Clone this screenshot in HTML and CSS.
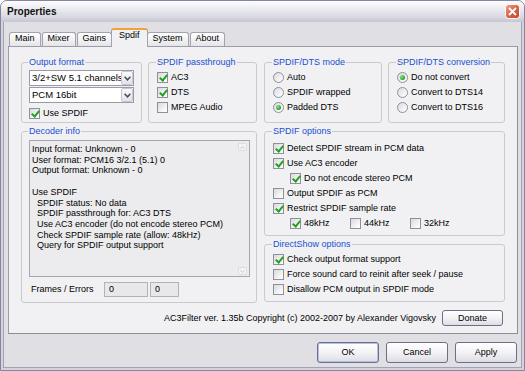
FILE: index.html
```html
<!DOCTYPE html>
<html>
<head>
	<meta charset="utf-8">
	<title>Properties</title>
	<link rel="stylesheet" href="styles.css">
</head>
<body>
	<div class="window">
		<div class="titlebar">
			<span class="title">Properties</span>
			<span class="close">
				<svg width="15" height="15" viewBox="0 0 15 15">
					<defs>
						<linearGradient id="red" x1="0" y1="0" x2="1" y2="1">
							<stop offset="0" stop-color="#f0a08c"/>
							<stop offset="0.5" stop-color="#dc6446"/>
							<stop offset="1" stop-color="#c4402a"/>
						</linearGradient>
					</defs>
					<rect x="0.5" y="0.5" width="14" height="14" rx="3" fill="url(#red)" stroke="#fff"/>
					<path d="M4 4 L11 11 M11 4 L4 11" stroke="#fff" stroke-width="1.8"/>
				</svg>
			</span>
		</div>
		<div class="client">
			<ul class="tabs">
				<li>Main</li>
				<li>Mixer</li>
				<li>Gains</li>
				<li class="active">Spdif</li>
				<li>System</li>
				<li>About</li>
			</ul>
			<div class="page">
				<div class="groups">
					<div class="half left">
						<div class="row">
							<fieldset class="g-output">
								<legend>Output format</legend>
								<div class="combo">
									<span class="val">3/2+SW 5.1 channels</span>
									<span class="drop"><svg width="7" height="5" viewBox="0 0 7 5"><path d="M0.6 0.8 L3.5 3.8 L6.4 0.8" fill="none" stroke="#4b4b5c" stroke-width="1.5"/></svg></span>
								</div>
								<div class="combo">
									<span class="val">PCM 16bit</span>
									<span class="drop"><svg width="7" height="5" viewBox="0 0 7 5"><path d="M0.6 0.8 L3.5 3.8 L6.4 0.8" fill="none" stroke="#4b4b5c" stroke-width="1.5"/></svg></span>
								</div>
								<label class="check use"><span class="cb on"></span>Use SPDIF</label>
							</fieldset>
							<fieldset class="g-pass">
								<legend>SPDIF passthrough</legend>
								<label class="check"><span class="cb on"></span>AC3</label>
								<label class="check"><span class="cb on"></span>DTS</label>
								<label class="check"><span class="cb"></span>MPEG Audio</label>
							</fieldset>
						</div>
						<fieldset class="g-info">
							<legend>Decoder info</legend>
							<div class="info">
<pre>Input format: Unknown - 0
User format: PCM16 3/2.1 (5.1) 0
Output format: Unknown - 0

Use SPDIF
  SPDIF status: No data
  SPDIF passthrough for: AC3 DTS
  Use AC3 encoder (do not encode stereo PCM)
  Check SPDIF sample rate (allow: 48kHz)
  Query for SPDIF output support</pre>
								<div class="scroll">
									<span class="arr"><svg width="5" height="3" viewBox="0 0 5 3"><path d="M0.5 2.6 L2.5 0.6 L4.5 2.6" fill="none" stroke="#c4c4cc" stroke-width="1"/></svg></span>
									<span class="arr"><svg width="5" height="3" viewBox="0 0 5 3"><path d="M0.5 0.4 L2.5 2.4 L4.5 0.4" fill="none" stroke="#c4c4cc" stroke-width="1"/></svg></span>
								</div>
							</div>
							<div class="frames">
								<span class="lbl">Frames / Errors</span>
								<span class="edit w1">0</span>
								<span class="edit w2">0</span>
							</div>
						</fieldset>
					</div>
					<div class="half right">
						<div class="row">
							<fieldset class="g-mode">
								<legend>SPDIF/DTS mode</legend>
								<label class="check"><span class="rb"></span>Auto</label>
								<label class="check"><span class="rb"></span>SPDIF wrapped</label>
								<label class="check"><span class="rb on"></span>Padded DTS</label>
							</fieldset>
							<fieldset class="g-conv">
								<legend>SPDIF/DTS conversion</legend>
								<label class="check"><span class="rb on"></span>Do not convert</label>
								<label class="check"><span class="rb"></span>Convert to DTS14</label>
								<label class="check"><span class="rb"></span>Convert to DTS16</label>
							</fieldset>
						</div>
						<fieldset class="g-opts">
							<legend>SPDIF options</legend>
							<label class="check"><span class="cb on"></span>Detect SPDIF stream in PCM data</label>
							<label class="check"><span class="cb on"></span>Use AC3 encoder</label>
							<label class="check sub"><span class="cb on"></span>Do not encode stereo PCM</label>
							<label class="check"><span class="cb"></span>Output SPDIF as PCM</label>
							<label class="check"><span class="cb on"></span>Restrict SPDIF sample rate</label>
							<div class="rates">
								<label class="check"><span class="cb on"></span>48kHz</label>
								<label class="check"><span class="cb"></span>44kHz</label>
								<label class="check"><span class="cb"></span>32kHz</label>
							</div>
						</fieldset>
						<fieldset class="g-ds">
							<legend>DirectShow options</legend>
							<label class="check"><span class="cb on"></span>Check output format support</label>
							<label class="check"><span class="cb"></span>Force sound card to reinit after seek / pause</label>
							<label class="check"><span class="cb"></span>Disallow PCM output in SPDIF mode</label>
						</fieldset>
					</div>
				</div>
				<div class="about">
					<span>AC3Filter ver. 1.35b Copyright (c) 2002-2007 by Alexander Vigovsky</span>
					<button class="btn small">Donate</button>
				</div>
			</div>
			<div class="buttons">
				<button class="btn default">OK</button>
				<button class="btn">Cancel</button>
				<button class="btn">Apply</button>
			</div>
		</div>
	</div>
</body>
</html>
```

FILE: styles.css
```css
* {
	margin: 0;
	padding: 0;
	box-sizing: border-box;
}
body {
	width: 525px;
	height: 371px;
	overflow: hidden;
	font: 9px/11px "Liberation Sans", Arial, sans-serif;
	color: #000;
	background: #fff;
}
.window {
	width: 525px;
	height: 371px;
	display: flex;
	flex-direction: column;
	border: 1px solid #85859d;
	border-radius: 7px 7px 0 0;
	background: #d3d3de;
	overflow: hidden;
}
.titlebar {
	flex: none;
	height: 21px;
	display: flex;
	align-items: center;
	justify-content: space-between;
	padding: 0 4px 0 6px;
	background: linear-gradient(#fdfdfe, #ececf2 35%, #d9d9e2 75%, #c6c6d2);
}
.title {
	font-size: 10px;
	font-weight: bold;
	color: #111;
}
.close {
	width: 15px;
	height: 15px;
	display: flex;
}
.client {
	flex: 1;
	margin: 0 2px 2px;
	border: 1px solid #a2a2b6;
	border-top: 0;
	background: #e0dfe3;
	padding: 6px 3px 0 4px;
}

/* tabs */
.tabs {
	display: flex;
	align-items: flex-end;
	height: 18px;
	list-style: none;
	padding-left: 1px;
}
.tabs li {
	height: 14px;
	margin-right: 1px;
	padding: 0 5px;
	line-height: 11px;
	border: 1px solid #a3a3ae;
	border-bottom: 0;
	border-radius: 3px 3px 0 0;
	background: linear-gradient(#fefefe, #f0f0f3 60%, #e4e4ea);
}
.tabs li.active {
	position: relative;
	z-index: 1;
	height: 19px;
	margin: 0 -1px -1px -2px;
	padding: 0 7px;
	border-top: 2px solid #f0a13a;
	background: #f1f1f3;
}
.page {
	height: 288px;
	border: 1px solid #9c9ca6;
	border-right-color: #8d8d98;
	border-bottom-color: #8d8d98;
	background: #f1f1f3;
	padding: 10px 12px 0;
}

/* groups */
.groups {
	display: flex;
	gap: 7px;
}
.half {
	display: flex;
	flex-direction: column;
	gap: 3px;
}
.left {
	width: 236px;
}
.right {
	width: 241px;
}
.row {
	display: flex;
	gap: 6px;
	height: 66px;
}
fieldset {
	min-width: 0;
	border: 1px solid #cacace;
	border-radius: 3px;
	padding: 2px 7px 0 8px;
}
legend {
	color: #1a4fcf;
	padding: 0 1px;
	margin-left: -1px;
	line-height: 11px;
}
.g-output {
	width: 121px;
	padding-left: 7px;
}
.g-pass {
	width: 109px;
}
.g-mode {
	width: 118px;
}
.g-conv {
	width: 117px;
}
.g-info {
	height: 177px;
	padding: 3px 6px 0 7px;
}
.g-opts {
	height: 110px;
	padding-top: 4px;
}
.g-ds {
	height: 63px;
}

/* check boxes and radios */
.check {
	display: flex;
	align-items: center;
	gap: 3px;
	height: 15px;
	white-space: nowrap;
}
.check.sub {
	padding-left: 17px;
}
.check.use {
	margin-top: 3px;
}
.rates {
	display: flex;
	padding-left: 17px;
}
.rates .check {
	width: 60px;
}
.cb,
.rb {
	position: relative;
	flex: none;
	width: 11px;
	height: 11px;
	border: 1px solid #8f909a;
	background: linear-gradient(135deg, #d9d9de, #f6f6f8 70%, #fff);
}
.rb {
	border-radius: 50%;
}
.cb.on::after {
	content: "";
	position: absolute;
	left: 3px;
	top: 0;
	width: 3px;
	height: 6px;
	border: solid #21a121;
	border-width: 0 2px 2px 0;
	transform: rotate(40deg);
}
.rb.on::after {
	content: "";
	position: absolute;
	left: 2px;
	top: 2px;
	width: 5px;
	height: 5px;
	border-radius: 50%;
	background: radial-gradient(circle at 35% 35%, #8fe58f, #21a121 70%);
}

/* combo boxes */
.combo {
	display: flex;
	height: 16px;
	border: 1px solid #9a9aaa;
	background: #fff;
}
.combo + .combo {
	margin-top: 1px;
}
.val {
	flex: 1;
	overflow: hidden;
	white-space: nowrap;
	padding-left: 2px;
	line-height: 14px;
	font-size: 9.5px;
}
.drop {
	flex: none;
	width: 12px;
	display: flex;
	align-items: center;
	justify-content: center;
	border: 1px solid #c7c7d2;
	border-radius: 2px;
	background: linear-gradient(#fafafc, #e2e2ea);
}

/* decoder info */
.info {
	display: flex;
	height: 137px;
	border: 1px solid #a6a6b0;
	background: #ececee;
}
.info pre {
	flex: 1;
	font: inherit;
	line-height: 10.7px;
	padding: 3px 2px;
}
.scroll {
	width: 11px;
	display: flex;
	flex-direction: column;
	justify-content: space-between;
	padding: 2px 2px 1px 0;
}
.arr {
	width: 9px;
	height: 8px;
	display: flex;
	align-items: center;
	justify-content: center;
	border: 1px solid #dcdce2;
	border-radius: 1px;
	background: #f3f3f6;
}
.frames {
	display: flex;
	align-items: center;
	height: 15px;
	margin-top: 5px;
	padding-left: 2px;
}
.lbl {
	width: 73px;
}
.edit {
	height: 15px;
	line-height: 13px;
	padding-left: 4px;
	border: 1px solid #b2b2ba;
	background: #e8e8ea;
}
.w1 {
	width: 44px;
}
.w2 {
	width: 29px;
	margin-left: 2px;
}

/* footer */
.about {
	display: flex;
	justify-content: flex-end;
	align-items: center;
	gap: 6px;
	margin-top: 7px;
	padding-right: 2px;
}
.buttons {
	display: flex;
	justify-content: flex-end;
	gap: 7px;
	margin-top: 8px;
	padding-right: 1px;
}
.btn {
	width: 62px;
	height: 21px;
	font: inherit;
	color: #000;
	border: 1px solid #6e6e88;
	border-radius: 3px;
	background: linear-gradient(#ffffff, #f3f3f6 50%, #dcdce4);
}
.btn.default {
	box-shadow: inset 0 0 0 1px #b4c0ea;
}
.btn.small {
	width: 61px;
	height: 16px;
}
```
